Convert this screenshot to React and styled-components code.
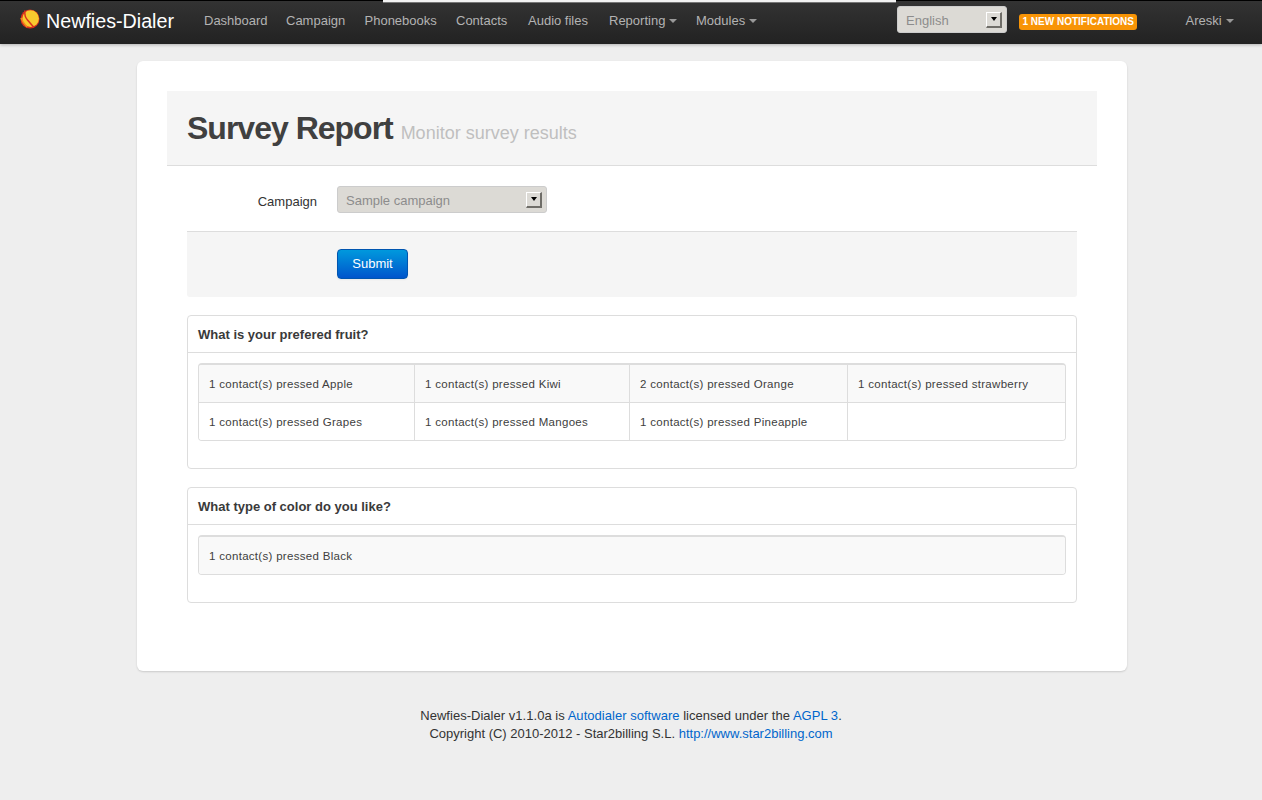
import React from 'react'
import styled, {createGlobalStyle} from 'styled-components'

const GlobalStyle = createGlobalStyle`
    html, body {
        margin: 0;
        padding: 0;
    }
    body {
        background-color: #eeeeee;
        color: #333333;
        font-family: "Liberation Sans", Arial, sans-serif;
        font-size: 13px;
        line-height: 18px;
    }
`;

const Page = styled.div`
    position: relative;
    min-height: 800px;
`;

const TopStrip = styled.div`
    position: absolute;
    top: 0;
    left: 383px;
    width: 513px;
    height: 3px;
    background-color: #f2f2f2;
    border-bottom: 1px solid #777777;
    box-sizing: border-box;
    z-index: 2;
`;

const Navbar = styled.div`
    height: 44px;
    box-sizing: border-box;
    display: flex;
    align-items: center;
    padding: 0 0 4px 20px;
    border-top: 1px solid #000000;
    background-image: linear-gradient(to bottom, #333333, #222222);
    box-shadow: 0 1px 3px rgba(0, 0, 0, 0.25);
`;

const Brand = styled.a`
    display: flex;
    align-items: center;
    gap: 6px;
    width: 184px;
    color: #ffffff;
    font-size: 19.7px;
    line-height: 24px;
    svg {
        flex: none;
        margin-top: -4px;
    }
`;

const NavList = styled.ul`
    display: flex;
    margin: 0;
    padding: 0;
    list-style: none;
    gap: 20px;
    width: 693px;
`;

const NavItem = styled.li`
    width: ${props => (props.$width ? `${props.$width}px` : 'auto')};
    color: #b3b3b3;
    font-size: 13px;
    display: flex;
    align-items: center;
    white-space: nowrap;
`;

const Caret = styled.span`
    display: inline-block;
    margin-left: 4px;
    margin-top: 1px;
    border-top: 4px solid #999999;
    border-left: 4px solid transparent;
    border-right: 4px solid transparent;
`;

const Select = styled.div`
    box-sizing: border-box;
    width: ${props => props.$width}px;
    height: 27px;
    display: flex;
    align-items: center;
    justify-content: space-between;
    padding: 0 4px 0 8px;
    background-color: #dcdad5;
    border: 1px solid #cccccc;
    border-radius: 3px;
    color: #8c8c8c;
    font-size: 13px;
`;

const NavSelect = styled(Select)`
    margin-bottom: 2px;
`;

const SelectText = styled.span`
    padding-top: 2px;
`;

const SelectArrow = styled.span`
    box-sizing: border-box;
    width: 16px;
    height: 16px;
    display: flex;
    align-items: center;
    justify-content: center;
    background-color: #dcdad5;
    border-style: solid;
    border-width: 1px 2px 2px 1px;
    border-color: #ffffff #6f6d68 #6f6d68 #ffffff;
    &::after {
        content: '';
        border-top: 4px solid #000000;
        border-left: 3.5px solid transparent;
        border-right: 3.5px solid transparent;
    }
`;

const Badge = styled.span`
    margin: 3px 0 0 12px;
    padding: 0 3.5px;
    height: 16px;
    line-height: 16px;
    background-color: #f89406;
    border-radius: 3px;
    color: #ffffff;
    font-size: 10px;
    font-weight: bold;
    white-space: nowrap;
`;

const UserMenu = styled(NavItem)`
    margin-left: 48px;
`;

const Card = styled.div`
    box-sizing: border-box;
    width: 990px;
    height: 610px;
    margin: 17px 0 0 137px;
    padding: 30px;
    background-color: #ffffff;
    border-radius: 6px;
    box-shadow: 0 1px 2px rgba(0, 0, 0, 0.15);
`;

const PageHeader = styled.div`
    box-sizing: border-box;
    height: 75px;
    padding: 16px 20px 0;
    background-color: #f5f5f5;
    border-bottom: 1px solid #dddddd;
`;

const Title = styled.h1`
    margin: 0;
    color: #404040;
    font-size: 32px;
    line-height: 42px;
    font-weight: bold;
    letter-spacing: -1px;
`;

const SubTitle = styled.small`
    color: #bfbfbf;
    font-size: 18px;
    font-weight: normal;
    letter-spacing: 0;
`;

const Body = styled.div`
    padding: 0 20px;
`;

const FormRow = styled.div`
    display: flex;
    align-items: center;
    gap: 20px;
    margin-top: 20px;
`;

const Label = styled.label`
    width: 130px;
    padding-top: 5px;
    text-align: right;
    color: #333333;
`;

const FormActions = styled.div`
    box-sizing: border-box;
    height: 66px;
    margin-top: 18px;
    padding: 17px 0 0 150px;
    background-color: #f5f5f5;
    border-top: 1px solid #dddddd;
    border-radius: 0 0 3px 3px;
`;

const SubmitButton = styled.button`
    box-sizing: border-box;
    width: 71px;
    height: 30px;
    padding: 0 0 2px;
    color: #ffffff;
    font-family: inherit;
    font-size: 13px;
    background-image: linear-gradient(to bottom, #0099dd, #0055cc);
    border: 1px solid #0055b0;
    border-radius: 4px;
    box-shadow: 0 1px 2px rgba(0, 0, 0, 0.05);
`;

const Panel = styled.section`
    box-sizing: border-box;
    margin-top: 18px;
    padding-bottom: 27px;
    border: 1px solid #dddddd;
    border-radius: 4px;
`;

const PanelHeader = styled.div`
    height: 36px;
    padding-left: 10px;
    border-bottom: 1px solid #dddddd;
    color: #3a3a3a;
    font-size: 13px;
    font-weight: bold;
    line-height: 37px;
`;

const ResultGrid = styled.div`
    display: grid;
    grid-template-columns: 215px 215px 218px 1fr;
    margin: 10px 10px 0;
    border: 1px solid #dddddd;
    border-top-width: 2px;
    border-radius: 4px;
    overflow: hidden;
    font-size: 11.5px;
    letter-spacing: 0.3px;
`;

const ResultCell = styled.div`
    box-sizing: border-box;
    height: ${props => (props.$row > 0 ? 38 : 37)}px;
    padding-left: 10px;
    line-height: 38px;
    color: #404040;
    background-color: ${props => (props.$striped ? '#f9f9f9' : '#ffffff')};
    border-left: ${props => (props.$col > 0 ? '1px solid #dddddd' : '0')};
    border-top: ${props => (props.$row > 0 ? '1px solid #dddddd' : '0')};
    grid-column: ${props => (props.$full ? '1 / -1' : 'auto')};
`;

const Footer = styled.footer`
    margin-top: 36px;
    text-align: center;
    color: #333333;
    font-size: 13px;
    a {
        color: #0066cc;
    }
`;

const FooterLine = styled.div`
    letter-spacing: ${props => props.$spacing}px;
`;

const Logo = () => (
    <svg width="20" height="20" viewBox="0 0 20 20">
        <circle cx="10" cy="10" r="9.5" fill="#d92f1e"/>
        <circle cx="10.6" cy="9.6" r="8.3" fill="#f8c92e"/>
        <path d="M5 1.5 Q4 7 7.5 11 L14 18.5" fill="none" stroke="#d92f1e" strokeWidth="1.5"/>
        <path d="M1 9 Q3 14 7 18" fill="none" stroke="#f08a1d" strokeWidth="1.5"/>
    </svg>
);

const navLinks = [
    {label: 'Dashboard', width: 62},
    {label: 'Campaign', width: 58.5},
    {label: 'Phonebooks', width: 71.5},
    {label: 'Contacts', width: 52},
    {label: 'Audio files', width: 61},
    {label: 'Reporting', width: 67, caret: true},
    {label: 'Modules', width: 60, caret: true},
];

const fruitResults = [
    '1 contact(s) pressed Apple',
    '1 contact(s) pressed Kiwi',
    '2 contact(s) pressed Orange',
    '1 contact(s) pressed strawberry',
    '1 contact(s) pressed Grapes',
    '1 contact(s) pressed Mangoes',
    '1 contact(s) pressed Pineapple',
    '',
];

const App = () => {
    return (
        <Page>
            <GlobalStyle/>
            <TopStrip/>
            <Navbar>
                <Brand><Logo/>Newfies-Dialer</Brand>
                <NavList>
                    {navLinks.map((link) => (
                        <NavItem key={link.label} $width={link.width}>
                            {link.label}{link.caret && <Caret/>}
                        </NavItem>
                    ))}
                </NavList>
                <NavSelect $width={110}><SelectText>English</SelectText><SelectArrow/></NavSelect>
                <Badge>1 NEW NOTIFICATIONS</Badge>
                <UserMenu>Areski<Caret/></UserMenu>
            </Navbar>
            <Card>
                <PageHeader>
                    <Title>Survey Report <SubTitle>Monitor survey results</SubTitle></Title>
                </PageHeader>
                <Body>
                    <FormRow>
                        <Label>Campaign</Label>
                        <Select $width={210}><SelectText>Sample campaign</SelectText><SelectArrow/></Select>
                    </FormRow>
                    <FormActions>
                        <SubmitButton>Submit</SubmitButton>
                    </FormActions>
                    <Panel>
                        <PanelHeader>What is your prefered fruit?</PanelHeader>
                        <ResultGrid>
                            {fruitResults.map((text, index) => (
                                <ResultCell key={index} $col={index % 4} $row={Math.floor(index / 4)} $striped={index < 4}>
                                    {text}
                                </ResultCell>
                            ))}
                        </ResultGrid>
                    </Panel>
                    <Panel>
                        <PanelHeader>What type of color do you like?</PanelHeader>
                        <ResultGrid>
                            <ResultCell $col={0} $row={0} $striped $full>
                                1 contact(s) pressed Black
                            </ResultCell>
                        </ResultGrid>
                    </Panel>
                </Body>
            </Card>
            <Footer>
                <FooterLine $spacing={0.03}>
                    Newfies-Dialer v1.1.0a is <a>Autodialer software</a> licensed under the <a>AGPL 3</a>.
                </FooterLine>
                <FooterLine $spacing={0}>
                    Copyright (C) 2010-2012 - Star2billing S.L. <a>http://www.star2billing.com</a>
                </FooterLine>
            </Footer>
        </Page>
    )
};

export default App;
